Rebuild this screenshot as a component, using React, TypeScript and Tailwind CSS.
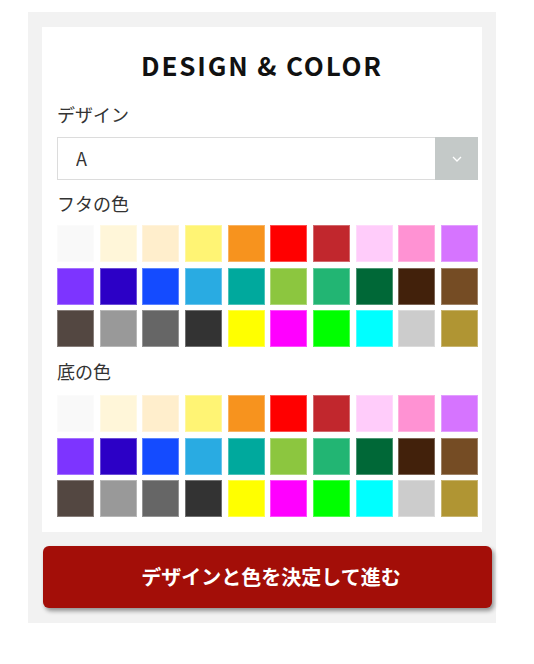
import React, { useState } from 'react';

const colors = [
  '#f9f9f9', '#fff6d9', '#ffeecc', '#fff474', '#f7931e', '#ff0000', '#c1272d', '#ffccfa', '#ff92d3', '#d674ff',
  '#7d34ff', '#2c00c6', '#144bff', '#29abe2', '#00a99d', '#8cc63f', '#22b573', '#006837', '#42210b', '#754c24',
  '#534741', '#999999', '#666666', '#333333', '#ffff00', '#ff00ff', '#00ff00', '#00ffff', '#cccccc', '#b09533',
];

const Swatches = ({ selected, onPick }: { selected: number; onPick: (i: number) => void }) => (
  <div className="grid grid-cols-10 gap-x-[5.6px] gap-y-[5.5px]">
    {colors.map((c, i) => (
      <button
        key={i}
        onClick={() => onPick(i)}
        title={c}
        className={`h-[37px] shadow-[inset_0_0_0_1px_rgba(255,255,255,0.3)] ${selected === i ? 'outline-2 outline-black' : ''}`}
        style={{ backgroundColor: c }}
      />
    ))}
  </div>
);

export default function App() {
  const [design, setDesign] = useState('A');
  const [lid, setLid] = useState(-1);
  const [base, setBase] = useState(-1);

  return (
    <div className="min-h-screen bg-white pt-[12px] font-['Noto_Sans_CJK_JP',sans-serif]">
      <div className="ml-[28px] w-[468px] bg-[#f2f2f2] pt-[15px] pb-[15px]">
        {/* Main panel */}
        <div className="ml-[14px] w-[440px] bg-white pt-[23px] pb-[15px]">
          <h2 className="text-center text-[26px] leading-[30px] font-bold tracking-[0.07em] text-[#111]">
            DESIGN &amp; COLOR
          </h2>

          <div className="pl-[15px] pr-[4px]">
            <p className="mt-[21px] text-[18px] leading-[26px] text-[#333]">デザイン</p>
            <div className="relative mt-[10px] h-[43px] border border-[#dcdcdc] bg-white">
              <select
                value={design}
                onChange={(e) => setDesign(e.target.value)}
                className="h-full w-full appearance-none bg-transparent pl-[18px] text-[18px] text-[#333] outline-none"
              >
                <option>A</option>
                <option>B</option>
                <option>C</option>
              </select>
              <div className="pointer-events-none absolute -top-px -right-px -bottom-px flex w-[43px] items-center justify-center bg-[#c4c9c8]">
                <svg width="10" height="6" viewBox="0 0 10 6" fill="none">
                  <polyline points="1,1 5,5 9,1" stroke="white" strokeWidth="1.3" />
                </svg>
              </div>
            </div>

            <p className="mt-[10px] text-[18px] leading-[26px] text-[#333]">フタの色</p>
            <div className="mt-[9px]">
              <Swatches selected={lid} onPick={setLid} />
            </div>

            <p className="mt-[11px] text-[18px] leading-[26px] text-[#333]">底の色</p>
            <div className="mt-[11px]">
              <Swatches selected={base} onPick={setBase} />
            </div>
          </div>
        </div>

        <button className="mt-[14px] ml-[15px] flex h-[62px] w-[449px] items-center justify-center rounded-[6px] bg-[#a30e08] pl-[7px] text-[20px] font-bold text-white shadow-[2px_3px_4px_rgba(0,0,0,0.4)]">
          デザインと色を決定して進む
        </button>
      </div>
    </div>
  );
}
